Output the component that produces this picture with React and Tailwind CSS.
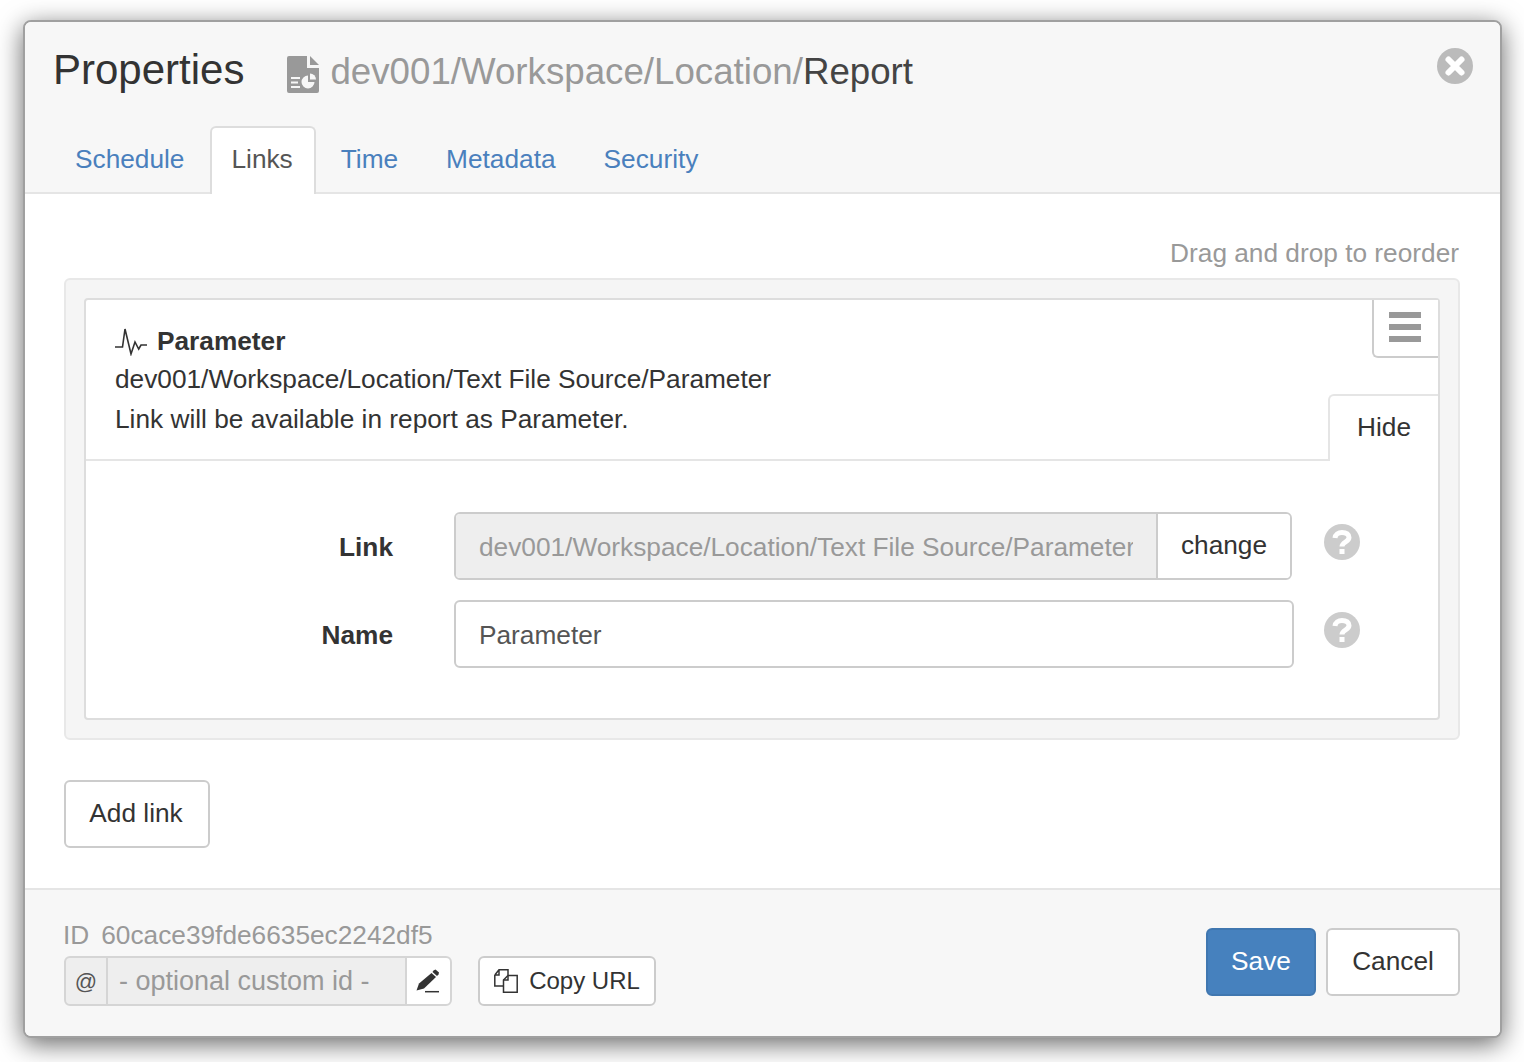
const ReportIcon = () => (
    <svg width="32" height="37" viewBox="0 0 32 37" className="mr-[11px] self-center shrink-0 translate-y-[3px]">
        <path d="M2 0H20V12H32V35a2 2 0 0 1-2 2H2a2 2 0 0 1-2-2V2a2 2 0 0 1 2-2Z" fill="#999" />
        <path d="M23 0L32 9H23Z" fill="#999" />
        <path d="M4 21h9v2H4zM4 25.500h7v2H4zM4 30h9v2H4z" fill="#f7f7f7" />
        <path d="M21 19.500a6.500 6.500 0 1 0 6.500 6.500H21Z" fill="#f7f7f7" />
        <path d="M23 17.500a6 6 0 0 1 6 6h-6Z" fill="#f7f7f7" />
    </svg>
);

const PulseIcon = () => (
    <svg width="32" height="28" viewBox="0 0 32 28" fill="none" stroke="#333" strokeWidth="1.600" className="mr-[10px]">
        <path d="M0 19H7.500L10 1L16 26L20 14L23.700 21L26 17H32" />
    </svg>
);

const PencilIcon = () => (
    <svg width="24" height="24" viewBox="0 0 24 24" className="mr-[2px]">
        <path d="M17.500 1.500L19.500 0.500L23 3.500L22.500 5.500L21 7L16.500 3Z" fill="#333" />
        <path d="M15.500 4L20 8L8 19.500L0.500 21.500L3 14.500Z" fill="#333" />
        <path d="M9 22.700H23" stroke="#333" strokeWidth="1.500" />
    </svg>
);

const CopyIcon = () => (
    <svg width="24" height="24" viewBox="0 0 24 24" fill="none" stroke="#333" strokeWidth="1.500">
        <path d="M0.800 6L5 0.800H14V6M0.800 6V17H9.500M5 0.800V6H0.800" />
        <path d="M9.500 11L14 6.500H23.200V23.200H9.500Z" fill="#fff" />
        <path d="M14 6.500V11H9.500" />
    </svg>
);

const HelpIcon = ({ className }) => (
    <svg width="36" height="36" viewBox="0 0 36 36" className={className}>
        <circle cx="18" cy="18" r="18" fill="#ccc" />
        <path d="M11 14a7 6 0 0 1 7-5.500c4.500 0 7 2 7 5 0 4.500-7 4.500-7 9" fill="none" stroke="#fff" strokeWidth="5" />
        <rect x="15.500" y="25" width="5" height="5" fill="#fff" />
    </svg>
);

const CloseIcon = () => (
    <svg width="36" height="36" viewBox="0 0 36 36" className="absolute top-[26px] right-[27px]">
        <circle cx="18" cy="18" r="18" fill="#bbb" />
        <path d="M11.500 11.500L24.500 24.500M24.500 11.500L11.500 24.500" stroke="#fff" strokeWidth="6" strokeLinecap="round" />
    </svg>
);

const tabs = ['Schedule', 'Links', 'Time', 'Metadata', 'Security'];

const App = () => {
    return (
        <div className="bg-white h-[1062px] pt-[20px] pl-[23px] font-['Liberation_Sans',Arial,sans-serif] text-[26.25px] text-[#333] overflow-hidden">
            <div className="relative w-[1479px] h-[1018px] flex flex-col bg-white border-2 border-[#a0a0a0] rounded-[8px] overflow-hidden shadow-[0_6px_26px_rgba(0,0,0,0.6)]">
                {/* header */}
                <div className="h-[172px] bg-[#f7f7f7] border-b-2 border-[#e5e5e5] flex flex-col justify-between shrink-0">
                    <div className="flex items-baseline pt-[21px] pl-[28px]">
                        <h1 className="text-[42px] leading-[54px] mr-[43px]">Properties</h1>
                        <ReportIcon />
                        <div className="text-[36.7px] leading-[54px] text-[#999]">
                            dev001/Workspace/Location/<span className="text-[#444]">Report</span>
                        </div>
                    </div>
                    <CloseIcon />
                    <div className="flex pl-[28px] -mb-[2px]">
                        {tabs.map((tab) =>
                            tab === 'Links' ? (
                                <div key={tab} className="h-[68px] mr-[3px] pl-[19px] pr-[21px] pt-[12px] bg-white border-2 border-b-0 border-[#ddd] rounded-t-[6px] text-[#555]">
                                    {tab}
                                </div>
                            ) : (
                                <div key={tab} className="h-[68px] mr-[4px] px-[20px] pt-[12px] border-2 border-transparent text-[#4a80bd]">
                                    {tab}
                                </div>
                            )
                        )}
                    </div>
                </div>

                {/* body */}
                <div className="flex-1 px-[39px] pt-[42px]">
                    <div className="text-right text-[#999] leading-[34px] mb-[8px] pr-[2px]">Drag and drop to reorder</div>
                    <div className="w-[1396px] h-[462px] p-[18px] bg-[#f5f5f5] border-2 border-[#e8e8e8] rounded-[6px]">
                        <div className="relative h-[422px] bg-white border-2 border-[#ddd] rounded-[4px]">
                            <div className="h-[161px] pl-[29px] pt-[23px] border-b-2 border-[#e5e5e5]">
                                <div className="flex items-center font-bold h-[37px]">
                                    <PulseIcon />
                                    Parameter
                                </div>
                                <div className="leading-[38px]">dev001/Workspace/Location/Text File Source/Parameter</div>
                                <div className="leading-[40px] mt-[1px]">Link will be available in report as Parameter.</div>
                            </div>
                            <div className="absolute top-0 right-0 w-[66px] h-[58px] pt-[12px] pr-[2px] flex flex-col gap-[6px] items-center bg-white border-b-2 border-l-2 border-[#ccc] rounded-bl-[6px]">
                                <div className="w-[32px] h-[6px] bg-[#999]" />
                                <div className="w-[32px] h-[6px] bg-[#999]" />
                                <div className="w-[32px] h-[6px] bg-[#999]" />
                            </div>
                            <div className="absolute top-[94px] right-0 w-[110px] h-[67px] pb-[2px] flex items-center justify-center bg-white border-t-2 border-l-2 border-[#e5e5e5] rounded-tl-[6px]">
                                Hide
                            </div>

                            <div className="pt-[51px] flex flex-col gap-[20px]">
                                <div className="flex items-center h-[68px]">
                                    <label className="w-[307px] pt-[4px] text-right font-bold">Link</label>
                                    <div className="flex ml-[61px] w-[838px] h-[68px] border-2 border-[#ccc] rounded-[6px] overflow-hidden">
                                        <input
                                            readOnly
                                            value="dev001/Workspace/Location/Text File Source/Parameter"
                                            className="flex-1 min-w-0 px-[23px] pt-[4px] bg-[#eee] text-[#999] outline-none"
                                        />
                                        <div className="w-[134px] flex items-center justify-center bg-white border-l-2 border-[#ccc]">change</div>
                                    </div>
                                    <HelpIcon className="ml-[32px] -translate-y-[4px]" />
                                </div>
                                <div className="flex items-center h-[68px]">
                                    <label className="w-[307px] pt-[4px] text-right font-bold">Name</label>
                                    <input
                                        readOnly
                                        value="Parameter"
                                        className="ml-[61px] w-[840px] h-[68px] px-[23px] pt-[2px] border-2 border-[#ccc] rounded-[6px] text-[#555] outline-none"
                                    />
                                    <HelpIcon className="ml-[30px] -translate-y-[4px]" />
                                </div>
                            </div>
                        </div>
                    </div>
                    <button className="mt-[40px] w-[146px] h-[68px] pr-[2px] bg-white border-2 border-[#ccc] rounded-[6px]">Add link</button>
                </div>

                {/* footer */}
                <div className="h-[148px] bg-[#f7f7f7] border-t-2 border-[#e5e5e5] shrink-0 flex justify-between pl-[39px] pr-[40px]">
                    <div className="pt-[27px]">
                        <div className="flex text-[#999] leading-[36px] mb-[3px] -ml-[1px]">
                            <span className="mr-[12px]">ID</span>
                            <span>60cace39fde6635ec2242df5</span>
                        </div>
                        <div className="flex items-center">
                            <div className="flex h-[50px] w-[388px] mr-[26px]">
                                <div className="w-[44px] flex items-center justify-center bg-[#eee] border-2 border-[#d5d5d5] rounded-l-[6px] text-[22px] text-[#555]">@</div>
                                <input
                                    readOnly
                                    placeholder="- optional custom id -"
                                    className="w-[297px] px-[11px] bg-[#eee] border-y-2 border-[#d5d5d5] text-[27px] text-[#999] placeholder:text-[#999] outline-none"
                                />
                                <div className="flex-1 flex items-center justify-center bg-white border-2 border-[#d5d5d5] rounded-r-[6px]">
                                    <PencilIcon />
                                </div>
                            </div>
                            <button className="w-[178px] h-[50px] flex items-center justify-center gap-[11px] bg-white border-2 border-[#ccc] rounded-[6px] text-[24px]">
                                <CopyIcon />
                                Copy URL
                            </button>
                        </div>
                    </div>
                    <div className="flex gap-[10px] pt-[38px]">
                        <button className="w-[110px] h-[68px] bg-[#4681be] border-2 border-[#4077b0] rounded-[6px] text-white">Save</button>
                        <button className="w-[134px] h-[68px] bg-white border-2 border-[#ccc] rounded-[6px]">Cancel</button>
                    </div>
                </div>
            </div>
        </div>
    );
};

export default App;
